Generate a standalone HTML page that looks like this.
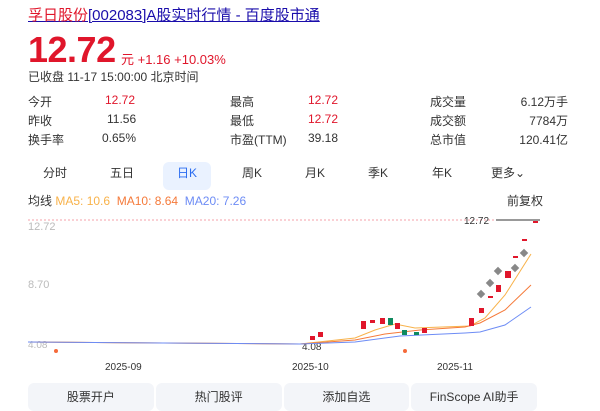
<!DOCTYPE html>
<html><head><meta charset="utf-8"><style>
*{margin:0;padding:0;box-sizing:border-box}
body{width:600px;height:411px;overflow:hidden;background:#fff;font-family:"Liberation Sans","Noto Sans CJK SC",sans-serif;color:#333;position:relative}
.a{position:absolute;white-space:nowrap}
.t{font-size:12px;color:#333}
.r{color:#e0162b}
</style></head><body>
<div class="a" style="left:28px;top:4px;font-size:15px;color:#1a0dab;text-decoration:underline"><span style="color:#e0162b">孚日股份</span>[002083]A股实时行情 - 百度股市通</div>
<div class="a r" style="left:28px;top:29px;font-size:36px;font-weight:bold;letter-spacing:-0.5px">12.72</div>
<div class="a r" style="left:121px;top:49px;font-size:13px">元 +1.16 +10.03%</div>
<div class="a t" style="left:28px;top:68px">已收盘 11-17 15:00:00 北京时间</div>
<div class="a t" style="left:28px;top:93px">今开</div><div class="a t r" style="left:105px;top:93px">12.72</div>
<div class="a t" style="left:28px;top:112px">昨收</div><div class="a t" style="left:107px;top:112px">11.56</div>
<div class="a t" style="left:28px;top:131px">换手率</div><div class="a t" style="left:102px;top:131px">0.65%</div>
<div class="a t" style="left:230px;top:93px">最高</div><div class="a t r" style="left:308px;top:93px">12.72</div>
<div class="a t" style="left:230px;top:112px">最低</div><div class="a t r" style="left:308px;top:112px">12.72</div>
<div class="a t" style="left:230px;top:131px">市盈(TTM)</div><div class="a t" style="left:308px;top:131px">39.18</div>
<div class="a t" style="left:430px;top:93px">成交量</div><div class="a t" style="right:32px;top:93px">6.12万手</div>
<div class="a t" style="left:430px;top:112px">成交额</div><div class="a t" style="right:32px;top:112px">7784万</div>
<div class="a t" style="left:430px;top:131px">总市值</div><div class="a t" style="right:32px;top:131px">120.41亿</div>
<div class="a" style="left:163px;top:162px;width:48px;height:28px;background:#eaf2ff;border-radius:6px"></div>
<div class="a t" style="left:43px;top:164px">分时</div>
<div class="a t" style="left:110px;top:164px">五日</div>
<div class="a t" style="left:177px;top:164px;color:#2a6cf0">日K</div>
<div class="a t" style="left:242px;top:164px">周K</div>
<div class="a t" style="left:305px;top:164px">月K</div>
<div class="a t" style="left:368px;top:164px">季K</div>
<div class="a t" style="left:432px;top:164px">年K</div>
<div class="a t" style="left:491px;top:164px">更多⌄</div>
<div class="a" style="left:28px;top:192px;font-size:12px"><span>均线</span> <span style="color:#f8b24a">MA5: 10.6</span>&nbsp; <span style="color:#f57a3a">MA10: 8.64</span>&nbsp; <span style="color:#6d8cf5">MA20: 7.26</span></div>
<div class="a t" style="left:507px;top:192px">前复权</div>
<svg class="a" style="left:0;top:210px" width="600" height="170">
<line x1="28" y1="10" x2="540" y2="10" stroke="#f4a0a8" stroke-dasharray="2,2"/>
<line x1="496" y1="10" x2="540" y2="10" stroke="#333"/>
<text x="464" y="14" font-size="10" fill="#333">12.72</text>
<text x="28" y="20" font-size="11" fill="#bbb">12.72</text>
<text x="28" y="78" font-size="11" fill="#bbb">8.70</text>
<text x="28" y="138" font-size="10" fill="#bbb">4.08</text>
<text x="302" y="140" font-size="10" fill="#333">4.08</text>
<circle cx="56" cy="141" r="2" fill="#f56a3a"/><circle cx="405" cy="141" r="2" fill="#f56a3a"/>
<path d="M28 132 L300 134 L355 128 L375 120 L395 114 L415 118 L470 116 L485 108 L505 85 L531 44" fill="none" stroke="#f8b24a"/>
<path d="M28 132 L300 134 L355 130 L385 124 L420 120 L465 117 L480 113 L505 100 L531 75" fill="none" stroke="#f57a3a"/>
<path d="M28 132 L300 134 L355 132 L400 126 L465 123 L480 122 L505 115 L531 97" fill="none" stroke="#6d8cf5"/>
<g fill="#e0162b"><rect x="310" y="126" width="5" height="4"/><rect x="318" y="122" width="5" height="5"/><rect x="361" y="111" width="5" height="8"/><rect x="370" y="110" width="5" height="3"/><rect x="380" y="108" width="5" height="6"/><rect x="395" y="113" width="5" height="6"/><rect x="422" y="118" width="5" height="5"/><rect x="469" y="108" width="5" height="8"/><rect x="479" y="98" width="5" height="5"/><rect x="488" y="86" width="5" height="2"/><rect x="496" y="75" width="5" height="7"/><rect x="505" y="61" width="6" height="7"/><rect x="513" y="46" width="5" height="2"/><rect x="522" y="29" width="5" height="2"/><rect x="533" y="11" width="5" height="2"/></g>
<g fill="#0f8a5f"><rect x="388" y="108" width="5" height="7"/><rect x="402" y="120" width="5" height="5"/><rect x="414" y="122" width="5" height="3"/></g>
<g fill="#888"><rect x="478" y="81" width="6" height="6" transform="rotate(45 481 84)"/><rect x="487" y="70" width="6" height="6" transform="rotate(45 490 73)"/><rect x="495" y="58" width="6" height="6" transform="rotate(45 498 61)"/><rect x="512" y="55" width="6" height="6" transform="rotate(45 515 58)"/><rect x="521" y="40" width="6" height="6" transform="rotate(45 524 43)"/></g>
<text x="105" y="160" font-size="10" fill="#333">2025-09</text>
<text x="292" y="160" font-size="10" fill="#333">2025-10</text>
<text x="437" y="160" font-size="10" fill="#333">2025-11</text>
</svg>
<div class="a" style="left:28px;top:383px;width:509px;height:28px;display:flex;gap:2px">
<div style="flex:1;background:#f3f5f9;border-radius:6px;font-size:12px;text-align:center;line-height:28px">股票开户</div>
<div style="flex:1;background:#f3f5f9;border-radius:6px;font-size:12px;text-align:center;line-height:28px">热门股评</div>
<div style="flex:1;background:#f3f5f9;border-radius:6px;font-size:12px;text-align:center;line-height:28px">添加自选</div>
<div style="flex:1;background:#f3f5f9;border-radius:6px;font-size:12px;text-align:center;line-height:28px">FinScope AI助手</div>
</div>
</body></html>
